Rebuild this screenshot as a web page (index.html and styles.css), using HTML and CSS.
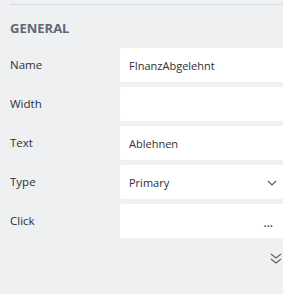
FILE: index.html
```html
<!DOCTYPE html>
<html lang="en">
<head>
    <meta charset="UTF-8">
    <meta name="viewport" content="width=device-width, initial-scale=1.0">
    <title>Properties</title>
    <link rel="stylesheet" href="styles.css">
</head>
<body>
    <div class="panel">
        <h2 class="section-title">GENERAL</h2>

        <div class="props">
            <label class="prop-label">Name</label>
            <div class="prop-field">FInanzAbgelehnt</div>

            <label class="prop-label">Width</label>
            <div class="prop-field"></div>

            <label class="prop-label">Text</label>
            <div class="prop-field">Ablehnen</div>

            <label class="prop-label">Type</label>
            <div class="prop-field select">
                <span>Primary</span>
                <svg class="chevron" width="10" height="6" viewBox="0 0 10 6">
                    <path d="M1 1 L5 5 L9 1" fill="none" stroke="#5b5f66" stroke-width="1.2"/>
                </svg>
            </div>

            <label class="prop-label">Click</label>
            <div class="prop-field action">
                <span class="dots">...</span>
            </div>
        </div>

        <div class="more">
            <svg width="12" height="11" viewBox="0 0 12 11">
                <path d="M1 1 L6 5 L11 1 M1 6 L6 10 L11 6" fill="none" stroke="#5b5f66" stroke-width="1.1"/>
            </svg>
        </div>
    </div>
</body>
</html>
```

FILE: styles.css
```css
body {
    margin: 0;
    background-color: #eff0f2;
    font-family: "Open Sans", "Noto Sans", sans-serif;
    color: #2b2f36;
    overflow: hidden;
}
.panel {
    margin-top: 4px;
    margin-left: 10px;
    border-top: 1px solid #d6dae0;
}
.section-title {
    margin: 0;
    padding-top: 14px;
    height: 29px;
    font-size: 13px;
    font-weight: 700;
    color: #5d6877;
}
.props {
    display: grid;
    grid-template-columns: 110px 1fr;
    grid-auto-rows: 34px;
    row-gap: 5px;
}
.prop-label {
    display: flex;
    align-items: center;
    font-size: 11.5px;
    color: #2b2f36;
    padding-bottom: 1px;
}
.prop-field {
    display: flex;
    align-items: center;
    background-color: #fff;
    border-radius: 2px 0 0 2px;
    padding-left: 9px;
    font-size: 11px;
    color: #2b2f36;
}
.select {
    justify-content: space-between;
    padding-right: 6px;
}
.chevron {
    margin-top: 1px;
}
.action {
    justify-content: flex-end;
    padding-right: 10px;
}
.dots {
    color: #2c5a8c;
    font-weight: 700;
    margin-top: 2px;
}
.more {
    display: flex;
    justify-content: flex-end;
    padding-top: 15px;
    padding-right: 1px;
}
```
